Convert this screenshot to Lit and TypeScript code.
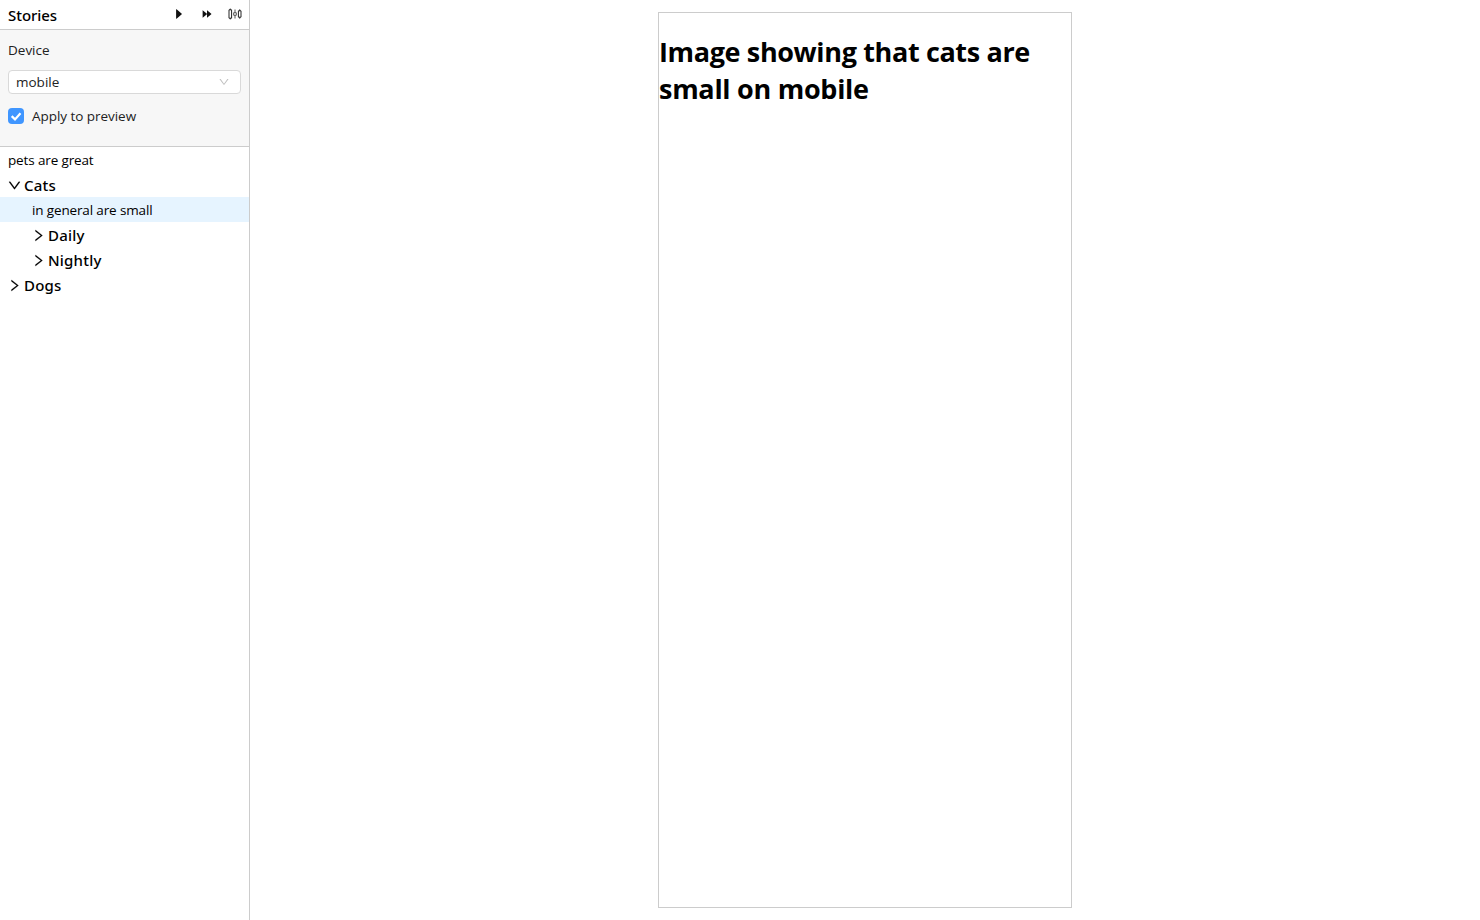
import { LitElement, html, css, svg } from "lit";
import { customElement } from "lit/decorators.js";

const paths: Record<string, string> = {
  play: "M715.8 493.5L335 165.1c-14.2-12.2-35-1.2-35 18.5v656.8c0 19.7 20.8 30.7 35 18.5l380.8-328.4c10.9-9.4 10.9-27.6 0-37z",
  forward: "M825.8 498L538.4 249.9c-10.7-9.2-26.4-.9-26.4 14v496.3c0 14.9 15.7 23.2 26.4 14L825.8 526c8.3-7.2 8.3-20.8 0-28zm-320 0L218.4 249.9c-10.7-9.2-26.4-.9-26.4 14v496.3c0 14.9 15.7 23.2 26.4 14L505.8 526c4.1-3.6 6.2-8.8 6.2-14 0-5.2-2.1-10.4-6.2-14z",
  down: "M884 256h-75c-5.1 0-9.9 2.5-12.9 6.6L512 654.2 227.9 262.6c-3-4.1-7.8-6.6-12.9-6.6h-75c-6.5 0-10.3 7.4-6.5 12.7l352.6 486.1c12.8 17.6 39 17.6 51.7 0l352.6-486.1c3.9-5.3.1-12.7-6.4-12.7z",
  right: "M765.7 486.8L314.9 134.7A7.97 7.97 0 00302 141v77.3c0 4.9 2.3 9.6 6.1 12.6l360 281.1-360 281.1c-3.9 3-6.1 7.7-6.1 12.6V883c0 6.7 7.7 10.4 12.9 6.3l450.8-352.1a31.96 31.96 0 000-50.4z",
};

const icon = (name: string) =>
  html`<svg class="icon" viewBox="0 0 1024 1024">${svg`<path d=${paths[name]}></path>`}</svg>`;

const sliders = html`<svg class="icon sliders" viewBox="0 0 14 14">
  <path d="M1 2.8H3.6V11.2H1ZM2.3 1.6V2.8M2.3 11.2V12.4M10.4 3.8H13V10.2H10.4ZM11.7 2.4V3.8M11.7 10.2V11.6"></path>
  <path class="soft" d="M5.7 5.7H8.3V8.3H5.7ZM7 2.5V5.7M7 8.3V11.5"></path>
</svg>`;

@customElement("app-root")
export class AppRoot extends LitElement {
  static styles = css`
    :host { display: flex; height: 920px; background: #fff; color: #000;
      font-family: "Open Sans", "Noto Sans", sans-serif; font-size: 13.5px; }
    * { box-sizing: border-box; }
    .sidebar { width: 250px; flex: none; border-right: 1px solid #ccc; }
    .header { height: 30px; border-bottom: 1px solid #ccc; display: flex; align-items: center;
      padding: 0 7px 0 8px; }
    .title { flex: 1; font-family: "Noto Sans", sans-serif; font-weight: 500; font-size: 15px;
      line-height: 28px; letter-spacing: -0.05px; }
    .actions { display: flex; gap: 14px; padding-bottom: 1px; color: #111; }
    .icon { width: 14px; height: 14px; fill: currentColor; flex: none; display: block; }
    .sliders path { fill: none; stroke: #222; stroke-width: 1; }
    .sliders .soft { stroke: #555; }
    .panel { height: 117px; background: #f7f7f7; border-bottom: 1px solid #ccc; padding: 9px 8px 0;
      color: #222; display: flex; flex-direction: column; }
    .label { line-height: 22px; height: 31px; }
    .select { height: 24px; background: #fff; border: 1px solid #d9d9d9; border-radius: 4px;
      display: flex; align-items: center; justify-content: space-between; padding: 0 10px 0 7px; }
    .select .icon { width: 12px; height: 12px; fill: #bfbfbf; }
    .check { display: flex; align-items: center; gap: 8px; height: 22px; margin-top: 11px; letter-spacing: -0.04px; }
    .box { width: 16px; height: 16px; border-radius: 4px; background: #4096ff; display: block; }
    .box path { fill: none; stroke: #fff; stroke-width: 2.2; }
    .row { height: 25px; line-height: 25px; padding: 1px 0 0 8px; display: flex; align-items: center;
      letter-spacing: -0.14px; }
    .group { font-family: "Noto Sans", sans-serif; font-size: 15px; font-weight: 500; letter-spacing: 0.2px;
      padding: 2px 0 0 7px; gap: 2px; }
    .group .icon { width: 15px; height: 15px; stroke: currentColor; stroke-width: 14; margin-bottom: 1px; }
    .child { padding-left: 32px; }
    .group.child { padding-left: 31px; }
    .selected { background: #e6f4ff; }
    .main { flex: 1; padding: 12px; display: flex; justify-content: center; }
    .preview { width: 414px; height: 896px; border: 1px solid #ccc; }
    .heading { margin: 20px 0 0; font-size: 27px; line-height: 37px; font-weight: 700; letter-spacing: -0.36px; }
    .heading .second { letter-spacing: -0.28px; }
  `;

  render() {
    return html`
      <div class="sidebar">
        <div class="header">
          <span class="title">Stories</span>
          <span class="actions">${icon("play")}${icon("forward")}${sliders}</span>
        </div>
        <div class="panel">
          <div class="label">Device</div>
          <div class="select"><span>mobile</span>${icon("down")}</div>
          <div class="check">
            <svg class="box" viewBox="0 0 16 16"><path d="M3.7 8.1L7 11.4L12.5 5.2"></path></svg>
            <span>Apply to preview</span>
          </div>
        </div>
        <div class="row"><span>pets are great</span></div>
        <div class="row group">${icon("down")}<span>Cats</span></div>
        <div class="row child selected"><span>in general are small</span></div>
        <div class="row group child">${icon("right")}<span>Daily</span></div>
        <div class="row group child">${icon("right")}<span>Nightly</span></div>
        <div class="row group">${icon("right")}<span>Dogs</span></div>
      </div>
      <div class="main">
        <div class="preview">
          <h1 class="heading">Image showing that cats are<br /><span class="second">small on mobile</span></h1>
        </div>
      </div>
    `;
  }
}
